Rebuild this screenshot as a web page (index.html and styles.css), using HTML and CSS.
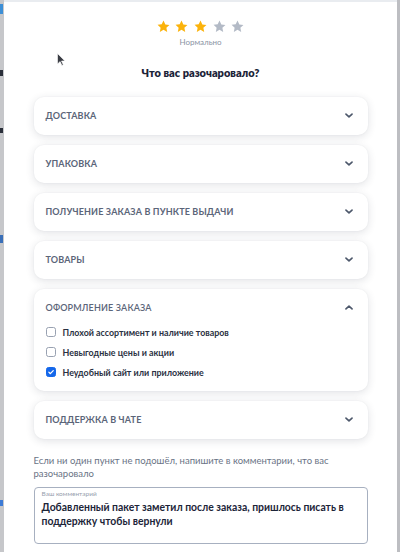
FILE: index.html
```html
<!DOCTYPE html>
<html lang="ru">
<head>
<meta charset="utf-8">
<link rel="stylesheet" href="styles.css">
</head>
<body>
<div class="page">
  <div class="side"><span class="frag f1"></span><span class="frag f2"></span><span class="frag f3"></span><span class="frag f4"></span><span class="frag f5"></span></div>
  <div class="modal">
    <div class="topbar"></div>
    <div class="stars">
      <svg class="star on" viewBox="0 0 24 24"><path d="M12 2.5l2.9 6.1 6.6.8-4.9 4.6 1.3 6.6L12 17.3l-5.9 3.3 1.3-6.6-4.9-4.6 6.6-.8z"/></svg>
      <svg class="star on" viewBox="0 0 24 24"><path d="M12 2.5l2.9 6.1 6.6.8-4.9 4.6 1.3 6.6L12 17.3l-5.9 3.3 1.3-6.6-4.9-4.6 6.6-.8z"/></svg>
      <svg class="star on" viewBox="0 0 24 24"><path d="M12 2.5l2.9 6.1 6.6.8-4.9 4.6 1.3 6.6L12 17.3l-5.9 3.3 1.3-6.6-4.9-4.6 6.6-.8z"/></svg>
      <svg class="star" viewBox="0 0 24 24"><path d="M12 2.5l2.9 6.1 6.6.8-4.9 4.6 1.3 6.6L12 17.3l-5.9 3.3 1.3-6.6-4.9-4.6 6.6-.8z"/></svg>
      <svg class="star" viewBox="0 0 24 24"><path d="M12 2.5l2.9 6.1 6.6.8-4.9 4.6 1.3 6.6L12 17.3l-5.9 3.3 1.3-6.6-4.9-4.6 6.6-.8z"/></svg>
    </div>
    <div class="rating-label">Нормально</div>
    <h2 class="title">Что вас разочаровало?</h2>
    <div class="list">
      <div class="card"><div class="card-head"><span>Доставка</span><svg class="chev" viewBox="0 0 10 6"><path d="M1.2 1.2L5 4.8l3.8-3.6"/></svg></div></div>
      <div class="card"><div class="card-head"><span>Упаковка</span><svg class="chev" viewBox="0 0 10 6"><path d="M1.2 1.2L5 4.8l3.8-3.6"/></svg></div></div>
      <div class="card"><div class="card-head"><span>Получение заказа в пункте выдачи</span><svg class="chev" viewBox="0 0 10 6"><path d="M1.2 1.2L5 4.8l3.8-3.6"/></svg></div></div>
      <div class="card"><div class="card-head"><span>Товары</span><svg class="chev" viewBox="0 0 10 6"><path d="M1.2 1.2L5 4.8l3.8-3.6"/></svg></div></div>
      <div class="card open">
        <div class="card-head"><span>Оформление заказа</span><svg class="chev" viewBox="0 0 10 6"><path d="M1.2 4.8L5 1.2l3.8 3.6"/></svg></div>
        <div class="options">
          <label class="opt"><span class="box"></span>Плохой ассортимент и наличие товаров</label>
          <label class="opt"><span class="box"></span>Невыгодные цены и акции</label>
          <label class="opt"><span class="box checked"><svg viewBox="0 0 10 10"><path d="M2.3 5.2l1.9 1.9 3.6-3.8"/></svg></span>Неудобный сайт или приложение</label>
        </div>
      </div>
      <div class="card"><div class="card-head"><span>Поддержка в чате</span><svg class="chev" viewBox="0 0 10 6"><path d="M1.2 1.2L5 4.8l3.8-3.6"/></svg></div></div>
    </div>
    <p class="hint">Если ни один пункт не подошёл, напишите в комментарии, что вас разочаровало</p>
    <div class="comment">
      <div class="comment-label">Ваш комментарий</div>
      <div class="comment-text">Добавленный пакет заметил после заказа, пришлось писать в поддержку чтобы вернули</div>
    </div>
    <svg class="cursor" viewBox="0 0 8 13"><path d="M0.5 0.5v10.5l2.6-2.4 1.8 3.8 1.4-.7-1.8-3.7h3.4z"/></svg>
  </div>
  <div class="side right"></div>
</div>
</body>
</html>
```

FILE: styles.css
```css
* { box-sizing: border-box; }
html, body { margin: 0; padding: 0; }
body {
  width: 400px;
  height: 552px;
  overflow: hidden;
  background: #c9cacd;
  font-family: "Lato", "Noto Sans", sans-serif;
}
.page {
  display: flex;
  height: 552px;
}
.side {
  width: 4px;
  flex: none;
  background: #c6c7ca;
  position: relative;
}
.side.right {
  width: 3px;
  background: #bdbec2;
}
.frag { position: absolute; left: 0; width: 3px; }
.f1 { top: 4px; height: 10px; background: #3d8fd6; }
.f2 { top: 70px; height: 6px; background: #2a2f3a; }
.f3 { top: 128px; height: 5px; background: #2a2f3a; }
.f4 { top: 235px; height: 8px; background: #3a6fb8; }
.f5 { top: 500px; height: 6px; background: #3d7bd6; }
.modal {
  position: relative;
  flex: 1;
  background: #fff;
  display: flex;
  flex-direction: column;
  align-items: center;
}
.topbar {
  align-self: stretch;
  height: 2px;
  background: #e9ecf0;
}
.stars {
  display: flex;
  gap: 3.7px;
  margin-top: 17px;
}
.star { width: 15px; height: 15px; fill: #b3bac6; }
.star.on { fill: #fbb30c; }
.rating-label {
  margin-top: 3px;
  font-size: 8px;
  color: #8a93a3;
}
.title {
  margin: 19px 0 0;
  font-size: 11px;
  font-weight: 800;
  color: #1c2438;
}
.list {
  width: 334px;
  margin-top: 17.5px;
  display: flex;
  flex-direction: column;
  gap: 10px;
}
.card {
  background: #fff;
  border-radius: 10px;
  box-shadow: 0 2px 9px rgba(40, 50, 70, 0.14), 0 0 2px rgba(40, 50, 70, 0.05);
}
.card-head {
  height: 38px;
  display: flex;
  align-items: center;
  justify-content: space-between;
  padding: 0 15px 0 12px;
  font-size: 9px;
  font-weight: 700;
  text-transform: uppercase;
  letter-spacing: 0.15px;
  color: #5b6579;
}
.card.open .card-head { font-weight: 600; }
.chev {
  width: 8px;
  height: 5px;
  fill: none;
  stroke: #4d586b;
  stroke-width: 2;
  stroke-linecap: round;
  stroke-linejoin: round;
}
.options {
  display: flex;
  flex-direction: column;
  gap: 9px;
  padding: 0 12px 13px;
}
.opt {
  display: flex;
  align-items: center;
  gap: 7px;
  font-size: 8.9px;
  font-weight: 700;
  color: #2a3142;
  height: 11px;
}
.box {
  width: 10px;
  height: 10px;
  border: 1px solid #98a1b1;
  border-radius: 2.5px;
  background: #fff;
  flex: none;
  display: flex;
}
.box.checked {
  background: #1467ea;
  border-color: #1467ea;
}
.box svg {
  width: 8px;
  height: 8px;
  fill: none;
  stroke: #fff;
  stroke-width: 1.6;
  stroke-linecap: round;
  stroke-linejoin: round;
}
.hint {
  width: 334px;
  margin: 15px 0 0;
  font-size: 9.5px;
  line-height: 13px;
  color: #6a7385;
}
.comment {
  width: 334px;
  height: 57px;
  margin-top: 7px;
  border: 1px solid #a7b0c0;
  border-radius: 4px;
  padding: 2px 7px;
}
.comment-label {
  font-size: 6.5px;
  color: #97a0ae;
  line-height: 8px;
  margin-bottom: 2px;
}
.comment-text {
  font-size: 10.4px;
  font-weight: 700;
  line-height: 14px;
  color: #1c2438;
}
.cursor {
  position: absolute;
  left: 53px;
  top: 53px;
  width: 8px;
  height: 13px;
  fill: #3a3d44;
  stroke: #ffffff;
  stroke-width: 0.6;
}
```
